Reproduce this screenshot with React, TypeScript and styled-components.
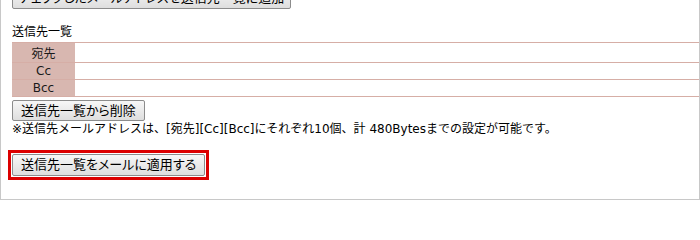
import React from 'react';
import styled, { createGlobalStyle } from 'styled-components';

const GlobalStyle = createGlobalStyle`
    html, body {
        margin: 0;
        padding: 0;
        background: #ffffff;
    }
    body {
        font-family: "DejaVu Sans", "Noto Sans CJK JP", sans-serif;
        font-size: 12px;
        color: #000000;
    }
`;

const Frame = styled.div`
    width: 700px;
    height: 200px;
    box-sizing: border-box;
    border: 1px solid #c8c8c8;
    border-top: none;
    overflow: hidden;
    padding-left: 11px;
`;

const Button = styled.button`
    display: block;
    height: 22px;
    padding: 0 8px;
    margin: 0;
    box-sizing: border-box;
    border: 1px solid #8c8c8c;
    border-radius: 2px;
    background: linear-gradient(#f7f7f7, #dedede);
    font-family: "Liberation Sans", "Noto Sans CJK JP", sans-serif;
    font-size: 13px;
    line-height: 18px;
    font-feature-settings: "palt";
    color: #000000;
    white-space: nowrap;
`;

// only its lower edge shows: the page is scrolled past it
const TopButton = styled(Button)`
    margin-top: -13px;
    padding: 0 6px;
`;

const SectionTitle = styled.div`
    margin-top: 15px;
    line-height: 16px;
    height: 16px;
`;

const RecipientList = styled.div`
    margin-top: 2px;
    border-top: 1px solid #d6aea6;
`;

const RecipientRow = styled.div<{ $height: number }>`
    display: flex;
    height: ${p => p.$height}px;
    border-bottom: 1px solid #d6aea6;
`;

const RowLabel = styled.div`
    width: 63px;
    flex: none;
    background: #d8b7b0;
    color: #1a1a1a;
    display: flex;
    align-items: center;
    justify-content: center;
    font-size: 12px;
`;

const RowField = styled.div`
    flex: 1;
`;

const DeleteButton = styled(Button)`
    margin-top: 3px;
    height: 21px;
    line-height: 17px;
`;

const Note = styled.div`
    line-height: 16px;
    white-space: nowrap;
`;

const Highlight = styled.div`
    display: inline-block;
    margin-top: 13px;
    margin-left: -4px;
    border: 3px solid #dc0000;
    padding: 1px;
`;

const rows = [
    { label: '宛先', height: 19 },
    { label: 'Cc', height: 16 },
    { label: 'Bcc', height: 16 },
];

export default function App() {
    return (
        <>
            <GlobalStyle />
            <Frame>
                <TopButton>チェックしたメールアドレスを送信先一覧に追加</TopButton>
                <SectionTitle>送信先一覧</SectionTitle>
                <RecipientList>
                    {rows.map(r => (
                        <RecipientRow key={r.label} $height={r.height}>
                            <RowLabel>{r.label}</RowLabel>
                            <RowField />
                        </RecipientRow>
                    ))}
                </RecipientList>
                <DeleteButton>送信先一覧から削除</DeleteButton>
                <Note>※送信先メールアドレスは、[宛先][Cc][Bcc]にそれぞれ10個、計 480Bytesまでの設定が可能です。</Note>
                <Highlight>
                    <Button>送信先一覧をメールに適用する</Button>
                </Highlight>
            </Frame>
        </>
    );
}
